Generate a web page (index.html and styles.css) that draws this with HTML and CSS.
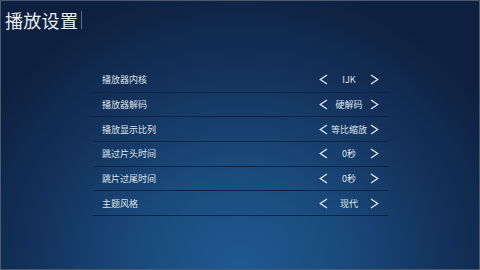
FILE: index.html
```html
<!DOCTYPE html>
<html lang="zh-CN">
<head>
    <meta charset="UTF-8">
    <title>播放设置</title>
    <link rel="stylesheet" href="styles.css">
</head>
<body>
    <div class="screen">
        <div class="header">
            <h1>播放设置</h1>
            <span class="bar"></span>
        </div>

        <ul class="settings">
            <li class="row">
                <span class="label">播放器内核</span>
                <div class="ctrl">
                    <svg class="arrow" viewBox="0 0 9 11"><path d="M8 1 L1.3 5.5 L8 10"/></svg>
                    <span class="value">IJK</span>
                    <svg class="arrow" viewBox="0 0 9 11"><path d="M1 1 L7.7 5.5 L1 10"/></svg>
                </div>
            </li>
            <li class="row">
                <span class="label">播放器解码</span>
                <div class="ctrl">
                    <svg class="arrow" viewBox="0 0 9 11"><path d="M8 1 L1.3 5.5 L8 10"/></svg>
                    <span class="value">硬解码</span>
                    <svg class="arrow" viewBox="0 0 9 11"><path d="M1 1 L7.7 5.5 L1 10"/></svg>
                </div>
            </li>
            <li class="row">
                <span class="label">播放显示比列</span>
                <div class="ctrl">
                    <svg class="arrow" viewBox="0 0 9 11"><path d="M8 1 L1.3 5.5 L8 10"/></svg>
                    <span class="value">等比缩放</span>
                    <svg class="arrow" viewBox="0 0 9 11"><path d="M1 1 L7.7 5.5 L1 10"/></svg>
                </div>
            </li>
            <li class="row">
                <span class="label">跳过片头时间</span>
                <div class="ctrl">
                    <svg class="arrow" viewBox="0 0 9 11"><path d="M8 1 L1.3 5.5 L8 10"/></svg>
                    <span class="value">0秒</span>
                    <svg class="arrow" viewBox="0 0 9 11"><path d="M1 1 L7.7 5.5 L1 10"/></svg>
                </div>
            </li>
            <li class="row">
                <span class="label">跳片过尾时间</span>
                <div class="ctrl">
                    <svg class="arrow" viewBox="0 0 9 11"><path d="M8 1 L1.3 5.5 L8 10"/></svg>
                    <span class="value">0秒</span>
                    <svg class="arrow" viewBox="0 0 9 11"><path d="M1 1 L7.7 5.5 L1 10"/></svg>
                </div>
            </li>
            <li class="row">
                <span class="label">主题风格</span>
                <div class="ctrl">
                    <svg class="arrow" viewBox="0 0 9 11"><path d="M8 1 L1.3 5.5 L8 10"/></svg>
                    <span class="value">现代</span>
                    <svg class="arrow" viewBox="0 0 9 11"><path d="M1 1 L7.7 5.5 L1 10"/></svg>
                </div>
            </li>
        </ul>
    </div>
</body>
</html>
```

FILE: styles.css
```css
html, body {
    margin: 0;
    padding: 0;
}
body {
    font-family: "Noto Sans CJK SC", "Noto Sans", sans-serif;
    color: #e4e8ee;
}
.screen {
    box-sizing: border-box;
    width: 480px;
    height: 270px;
    border: 1px solid #4a596c;
    background: radial-gradient(ellipse 300px 290px at 50% 100%, #1f5a91 0%, #1a4a7c 35%, #13315a 70%, #0e203f 100%);
    overflow: hidden;
}
.header {
    display: flex;
    align-items: center;
    padding: 7px 0 0 4px;
    height: 24px;
}
.header h1 {
    margin: 0;
    font-size: 18px;
    font-weight: normal;
    line-height: 24px;
    color: #e8ebf0;
    letter-spacing: 0.3px;
}
.bar {
    width: 1px;
    height: 18px;
    margin-left: 3px;
    background: #4d6f98;
}
.settings {
    list-style: none;
    margin: 36px 0 0 92px;
    padding: 0;
    width: 295px;
}
.row {
    display: flex;
    align-items: center;
    justify-content: space-between;
    height: 23.7px;
    border-bottom: 1px solid #0f2342;
    padding: 0 9px 0 9px;
}
.label {
    font-size: 9px;
    color: #dfe4ea;
}
.ctrl {
    display: flex;
    align-items: center;
}
.value {
    width: 42px;
    text-align: center;
    font-size: 9px;
    color: #dfe4ea;
}
.arrow {
    width: 9px;
    height: 11px;
    fill: none;
    stroke: #e2e6ec;
    stroke-width: 1.3;
}
```
